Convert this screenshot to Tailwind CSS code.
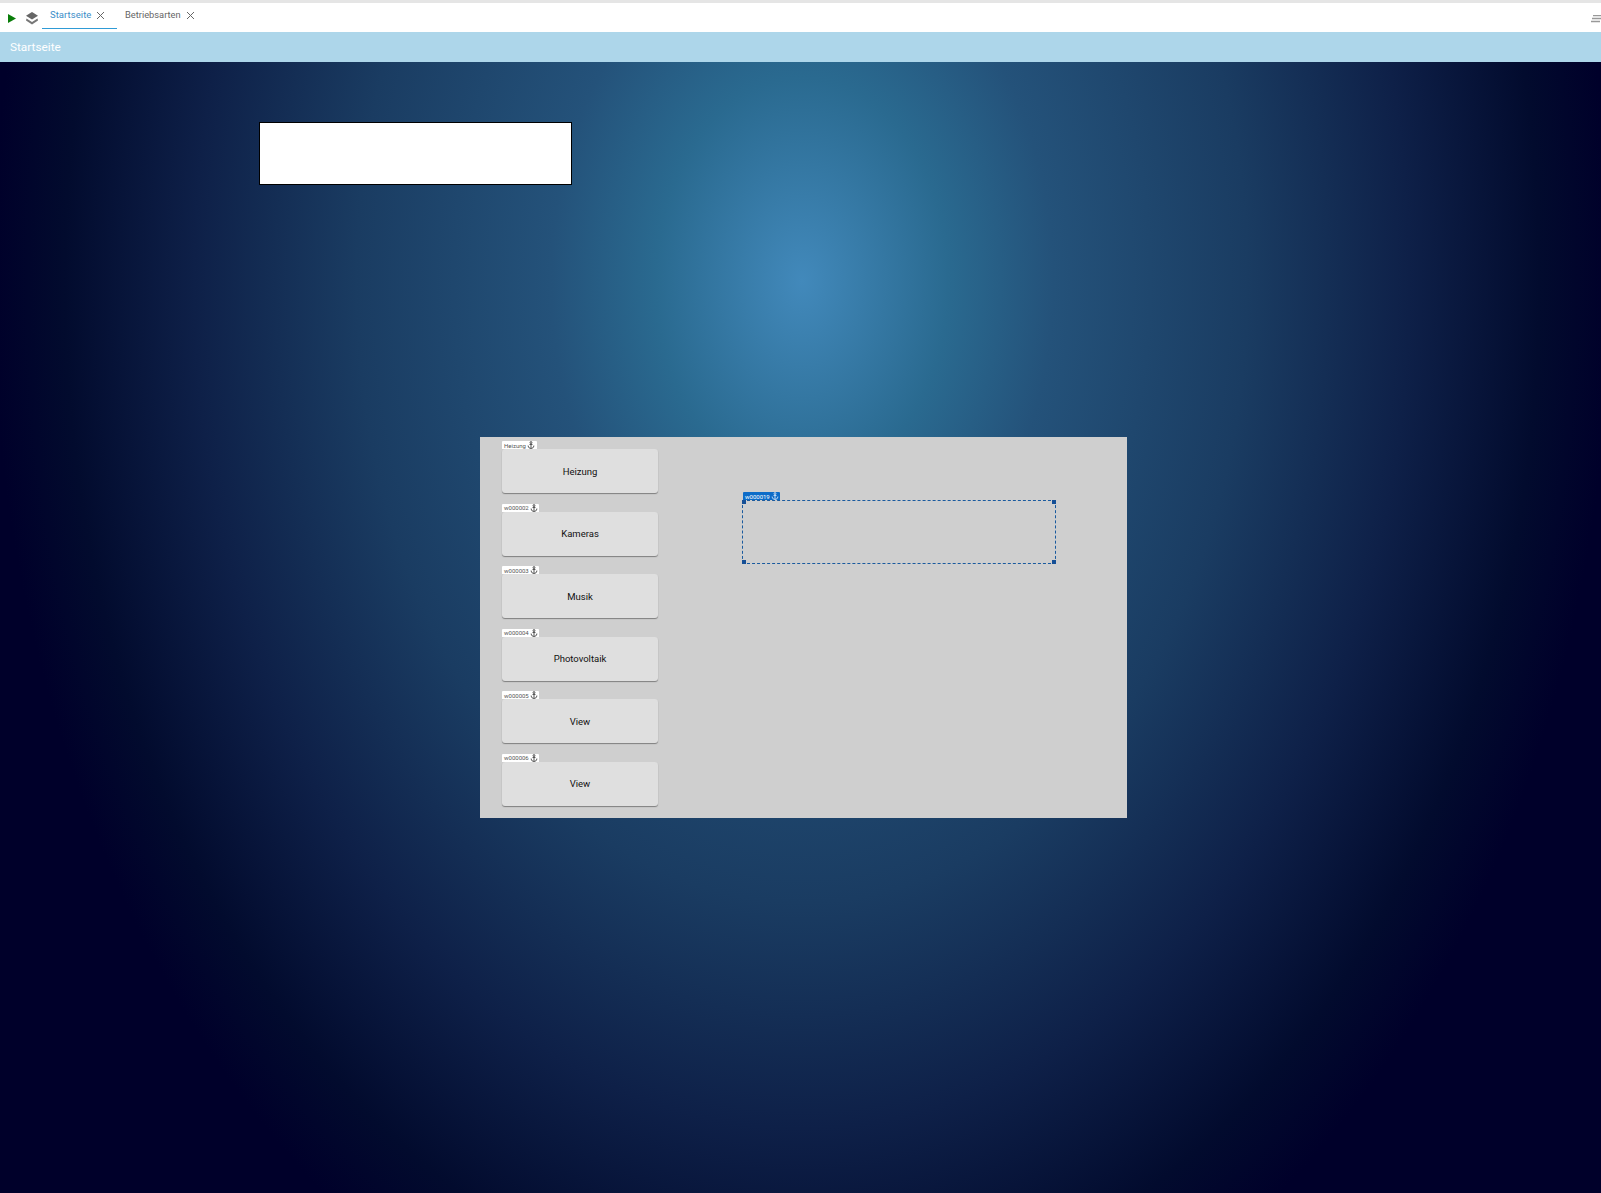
<!DOCTYPE html>
<html><head><meta charset="utf-8"><script src="https://cdn.jsdelivr.net/npm/@tailwindcss/browser@4"></script></head>
<body class="m-0 overflow-hidden bg-white font-['Roboto',sans-serif]">
<div class="flex h-[1193px] w-[1601px] flex-col">
  <div class="h-[3px] bg-[#e5e5e5]"></div>
  <div class="relative flex h-[29px] items-start bg-white">
    <svg class="ml-[8px] mt-[11px]" width="8" height="9" viewBox="0 0 8 9"><path d="M0 0L8 4.5L0 9Z" fill="#0a7d0a"/></svg>
    <svg class="ml-[10px] mt-[9px]" width="12" height="13" viewBox="0 0 12 13"><path d="M6 0L12 3.7L6 7.4L0 3.7Z" fill="#666"/><path d="M0.5 6.6L6 10L11.5 6.6L12 8.6L6 12.6L0 8.6Z" fill="#777"/></svg>
    <div class="ml-[4px] flex h-[26px] w-[75px] items-start border-b-[1.5px] border-[#2f9bd6] pl-[8px] pt-[5px]">
      <span class="text-[9.5px] leading-[13px] tracking-[0.05px] text-[#3b8ec9]">Startseite</span>
      <svg class="ml-[5px] mt-[3px]" width="9" height="9" viewBox="0 0 9 9"><path d="M1 1L8 8M8 1L1 8" stroke="#666" stroke-width="1"/></svg>
    </div>
    <div class="ml-[8px] flex pt-[5px]">
      <span class="text-[9.3px] leading-[13px] text-[#666]">Betriebsarten</span>
      <svg class="ml-[5px] mt-[3px]" width="9" height="9" viewBox="0 0 9 9"><path d="M1 1L8 8M8 1L1 8" stroke="#666" stroke-width="1"/></svg>
    </div>
    <svg class="absolute right-0 top-[12px]" width="10" height="8" viewBox="0 0 10 8"><path d="M2 .5H10M1 3.5H10M0 6.5H9" stroke="#999" stroke-width="1.6"/></svg>
  </div>
  <div class="flex h-[30px] items-center bg-[#add6ea] pl-[10px] pt-[1px] text-[11.8px] text-white">Startseite</div>
  <div class="relative flex-1 bg-[radial-gradient(ellipse_810px_1130px_at_802px_219px,#4289bb_0%,#2a6a90_18%,#24527a_31%,#1a3c62_55%,#0e2048_75%,#020b2e_91%,#00002a_100%)]">
    <div class="absolute left-[259px] top-[60px] h-[63px] w-[313px] border border-black bg-white"></div>
    <div class="absolute left-[480px] top-[375px] h-[381px] w-[647px] bg-[#cfcfcf]">
      <div class="ml-[22px] mt-[12px] flex w-[156px] flex-col gap-[18.5px]">
        <div class="relative flex h-[44px] items-center justify-center rounded-[3px] bg-[#dfdfdf] pt-[2px] text-[9.5px] text-[#111] shadow-[0_1px_1px_#7f7f7f]">
          <div class="absolute left-0 top-[-8px] flex h-[8px] w-[35px] items-center rounded-t-[1px] bg-white pl-[2px] text-[6px] text-[#555]">Heizung<svg class="ml-[1px]" width="8" height="8" viewBox="0 0 7 7" fill="none" stroke="#444" stroke-width=".8"><circle cx="3.5" cy="1.3" r=".8"/><path d="M3.5 2V6.5M1 4C1 6 2.5 6.5 3.5 6.5S6 6 6 4M2.2 3H4.8"/></svg></div>
          Heizung</div>
        <div class="relative flex h-[44px] items-center justify-center rounded-[3px] bg-[#dfdfdf] pt-[2px] text-[9.5px] text-[#111] shadow-[0_1px_1px_#7f7f7f]">
          <div class="absolute left-0 top-[-8px] flex h-[8px] w-[37px] items-center rounded-t-[1px] bg-white pl-[2px] text-[6px] text-[#555]">w000002<svg class="ml-[1px]" width="8" height="8" viewBox="0 0 7 7" fill="none" stroke="#444" stroke-width=".8"><circle cx="3.5" cy="1.3" r=".8"/><path d="M3.5 2V6.5M1 4C1 6 2.5 6.5 3.5 6.5S6 6 6 4M2.2 3H4.8"/></svg></div>
          Kameras</div>
        <div class="relative flex h-[44px] items-center justify-center rounded-[3px] bg-[#dfdfdf] pt-[2px] text-[9.5px] text-[#111] shadow-[0_1px_1px_#7f7f7f]">
          <div class="absolute left-0 top-[-8px] flex h-[8px] w-[37px] items-center rounded-t-[1px] bg-white pl-[2px] text-[6px] text-[#555]">w000003<svg class="ml-[1px]" width="8" height="8" viewBox="0 0 7 7" fill="none" stroke="#444" stroke-width=".8"><circle cx="3.5" cy="1.3" r=".8"/><path d="M3.5 2V6.5M1 4C1 6 2.5 6.5 3.5 6.5S6 6 6 4M2.2 3H4.8"/></svg></div>
          Musik</div>
        <div class="relative flex h-[44px] items-center justify-center rounded-[3px] bg-[#dfdfdf] pt-[2px] text-[9.5px] text-[#111] shadow-[0_1px_1px_#7f7f7f]">
          <div class="absolute left-0 top-[-8px] flex h-[8px] w-[37px] items-center rounded-t-[1px] bg-white pl-[2px] text-[6px] text-[#555]">w000004<svg class="ml-[1px]" width="8" height="8" viewBox="0 0 7 7" fill="none" stroke="#444" stroke-width=".8"><circle cx="3.5" cy="1.3" r=".8"/><path d="M3.5 2V6.5M1 4C1 6 2.5 6.5 3.5 6.5S6 6 6 4M2.2 3H4.8"/></svg></div>
          Photovoltaik</div>
        <div class="relative flex h-[44px] items-center justify-center rounded-[3px] bg-[#dfdfdf] pt-[2px] text-[9.5px] text-[#111] shadow-[0_1px_1px_#7f7f7f]">
          <div class="absolute left-0 top-[-8px] flex h-[8px] w-[37px] items-center rounded-t-[1px] bg-white pl-[2px] text-[6px] text-[#555]">w000005<svg class="ml-[1px]" width="8" height="8" viewBox="0 0 7 7" fill="none" stroke="#444" stroke-width=".8"><circle cx="3.5" cy="1.3" r=".8"/><path d="M3.5 2V6.5M1 4C1 6 2.5 6.5 3.5 6.5S6 6 6 4M2.2 3H4.8"/></svg></div>
          View</div>
        <div class="relative flex h-[44px] items-center justify-center rounded-[3px] bg-[#dfdfdf] pt-[2px] text-[9.5px] text-[#111] shadow-[0_1px_1px_#7f7f7f]">
          <div class="absolute left-0 top-[-8px] flex h-[8px] w-[37px] items-center rounded-t-[1px] bg-white pl-[2px] text-[6px] text-[#555]">w000006<svg class="ml-[1px]" width="8" height="8" viewBox="0 0 7 7" fill="none" stroke="#444" stroke-width=".8"><circle cx="3.5" cy="1.3" r=".8"/><path d="M3.5 2V6.5M1 4C1 6 2.5 6.5 3.5 6.5S6 6 6 4M2.2 3H4.8"/></svg></div>
          View</div>
      </div>
      <div class="absolute left-[262px] top-[63px] h-[64px] w-[314px] border border-dashed border-[#1a5a9e]">
        <div class="absolute left-[0px] top-[-9px] flex h-[8px] w-[37px] items-center rounded-t-[1px] bg-[#0d6cc8] pl-[2px] text-[6px] text-white">w000019<svg class="ml-[1px]" width="8" height="8" viewBox="0 0 7 7" fill="none" stroke="#cfe3f7" stroke-width=".8"><circle cx="3.5" cy="1.3" r=".8"/><path d="M3.5 2V6.5M1 4C1 6 2.5 6.5 3.5 6.5S6 6 6 4M2.2 3H4.8"/></svg></div>
        <div class="absolute left-[-1px] top-[-1px] size-[4px] bg-[#154f96]"></div>
        <div class="absolute right-[-1px] top-[-1px] size-[4px] bg-[#154f96]"></div>
        <div class="absolute bottom-[-1px] left-[-1px] size-[4px] bg-[#154f96]"></div>
        <div class="absolute bottom-[-1px] right-[-1px] size-[4px] bg-[#154f96]"></div>
      </div>
    </div>
  </div>
</div>
</body></html>
